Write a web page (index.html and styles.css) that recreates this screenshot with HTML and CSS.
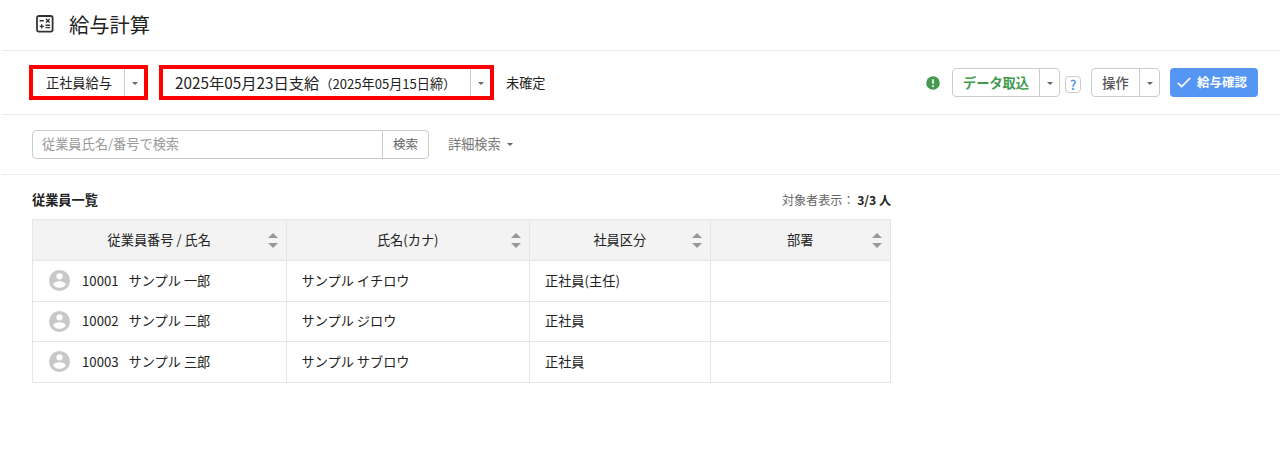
FILE: index.html
```html
<!DOCTYPE html>
<html lang="ja">
<head>
    <meta charset="UTF-8">
    <meta name="viewport" content="width=device-width, initial-scale=1.0">
    <title>給与計算</title>
    <link rel="stylesheet" href="styles.css">
</head>
<body>
    <header class="page-header">
        <svg class="calc-icon" width="18" height="18" viewBox="0 0 18 18" fill="none" stroke="#333">
            <rect x="1" y="1" width="15.6" height="15.6" rx="1.8" stroke-width="1.8"/>
            <path d="M3.6 5.800h4.200M3.600 11.400h4.200M5.700 9.300v4.200M9.600 10.300h4.400M9.600 12.600h4.400M10 4l3.600 3.600M13.600 4l-3.600 3.600" stroke-width="1.4"/>
        </svg>
        <h1>給与計算</h1>
    </header>

    <section class="toolbar">
        <div class="select select-type">
            <span class="select-label">正社員給与</span>
            <span class="select-toggle"><i class="caret"></i></span>
        </div>
        <div class="select select-date">
            <span class="select-label">2025年05月23日支給<small>（2025年05月15日締）</small></span>
            <span class="select-toggle"><i class="caret"></i></span>
        </div>
        <span class="status">未確定</span>

        <div class="actions">
            <svg class="alert-icon" width="14" height="14" viewBox="0 0 14 14">
                <circle cx="7" cy="7" r="6.8" fill="#439a50"/>
                <path d="M7 3.2v4.6M7 9.2v1.7" stroke="#fff" stroke-width="1.6"/>
            </svg>
            <div class="split-button import">
                <button class="main">データ取込</button>
                <button class="toggle"><i class="caret"></i></button>
            </div>
            <a class="help" href="#">?</a>
            <div class="split-button operate">
                <button class="main">操作</button>
                <button class="toggle"><i class="caret"></i></button>
            </div>
            <button class="confirm">
                <svg width="14" height="11" viewBox="0 0 14 11" fill="none" stroke="#fff" stroke-width="1.7">
                    <path d="M.8 5.8l3.8 3.8L13.2 1"/>
                </svg>
                給与確認
            </button>
        </div>
    </section>

    <section class="search">
        <div class="search-box">
            <input type="text" placeholder="従業員氏名/番号で検索">
            <button>検索</button>
        </div>
        <a class="search-detail" href="#">詳細検索<i class="caret"></i></a>
    </section>

    <main class="employees">
        <div class="list-head">
            <h2>従業員一覧</h2>
            <p>対象者表示： <b>3/3 人</b></p>
        </div>
        <table>
            <colgroup>
                <col class="col-number">
                <col class="col-kana">
                <col class="col-type">
                <col class="col-dept">
            </colgroup>
            <thead>
                <tr>
                    <th><div class="th-inner">従業員番号 / 氏名<span class="sort"></span></div></th>
                    <th><div class="th-inner">氏名(カナ)<span class="sort"></span></div></th>
                    <th><div class="th-inner">社員区分<span class="sort"></span></div></th>
                    <th><div class="th-inner">部署<span class="sort"></span></div></th>
                </tr>
            </thead>
            <tbody>
                <tr>
                    <td>
                        <div class="person">
                            <svg class="avatar" viewBox="0 0 20 20"><circle cx="10" cy="10" r="10" fill="#c8c8c8"/><circle cx="10" cy="6" r="3" fill="#fff"/><path d="M4 13.8c.1-2 4-3.1 6-3.1s5.900 1.100 6 3.100c-1.300 2-3.500 3.200-6 3.200s-4.700-1.200-6-3.200z" fill="#fff"/></svg>
                            <span class="number">10001</span>サンプル 一郎
                        </div>
                    </td>
                    <td>サンプル イチロウ</td>
                    <td>正社員(主任)</td>
                    <td></td>
                </tr>
                <tr>
                    <td>
                        <div class="person">
                            <svg class="avatar" viewBox="0 0 20 20"><circle cx="10" cy="10" r="10" fill="#c8c8c8"/><circle cx="10" cy="6" r="3" fill="#fff"/><path d="M4 13.8c.1-2 4-3.1 6-3.1s5.900 1.100 6 3.100c-1.300 2-3.500 3.200-6 3.200s-4.700-1.200-6-3.200z" fill="#fff"/></svg>
                            <span class="number">10002</span>サンプル 二郎
                        </div>
                    </td>
                    <td>サンプル ジロウ</td>
                    <td>正社員</td>
                    <td></td>
                </tr>
                <tr>
                    <td>
                        <div class="person">
                            <svg class="avatar" viewBox="0 0 20 20"><circle cx="10" cy="10" r="10" fill="#c8c8c8"/><circle cx="10" cy="6" r="3" fill="#fff"/><path d="M4 13.8c.1-2 4-3.1 6-3.1s5.900 1.100 6 3.100c-1.300 2-3.500 3.200-6 3.200s-4.700-1.200-6-3.200z" fill="#fff"/></svg>
                            <span class="number">10003</span>サンプル 三郎
                        </div>
                    </td>
                    <td>サンプル サブロウ</td>
                    <td>正社員</td>
                    <td></td>
                </tr>
            </tbody>
        </table>
    </main>
</body>
</html>
```
FILE: styles.css
```css
* {
    margin: 0;
    padding: 0;
    box-sizing: border-box;
}

body {
    font-family: "Noto Sans CJK JP", sans-serif;
    font-size: 13.2px;
    line-height: 20px;
    color: #222;
    background-color: #fff;
    padding-left: 2px;
}

button,
input {
    font-family: inherit;
    font-size: inherit;
    line-height: 20px;
    background: none;
    border: none;
}

a {
    text-decoration: none;
}

/* Header */
.page-header {
    display: flex;
    align-items: center;
    height: 51px;
    padding: 0 0 3px 34px;
    border-bottom: 1px solid #ebebeb;
}

.page-header h1 {
    margin-left: 15px;
    font-size: 20.3px;
    font-weight: 400;
    line-height: 30px;
}

/* Toolbar */
.toolbar {
    display: flex;
    align-items: center;
    height: 64px;
    padding: 0 22px 0 27px;
    border-bottom: 1px solid #ebebeb;
}

.select {
    display: flex;
    height: 35px;
    border: 4px solid #f00;
}

.select-label {
    flex: 1;
    padding-left: 12px;
    line-height: 27px;
    white-space: nowrap;
}

.select-toggle {
    display: flex;
    align-items: center;
    justify-content: center;
    border-left: 1px solid #ccc;
}

.select-type {
    width: 119px;
}

.select-type .select-label {
    padding-left: 13px;
}

.select-type .select-toggle {
    width: 20px;
}

.select-date {
    width: 335px;
    margin-left: 11px;
}

.select-date .select-label {
    font-size: 15.3px;
}

.select-date small {
    font-size: 13.1px;
}

.select-date .select-toggle {
    width: 20px;
}

.caret {
    display: inline-block;
    margin-top: 1px;
    border: 3px solid transparent;
    border-top-color: #666;
    border-bottom: none;
}

.status {
    margin-left: 12px;
}

.actions {
    display: flex;
    align-items: center;
    margin-left: auto;
}

.split-button {
    display: flex;
    height: 29px;
    border: 1px solid #ccc;
    border-radius: 4px;
}

.split-button .main {
    flex: 1;
    color: #555;
    font-weight: 500;
}

.split-button .toggle {
    display: flex;
    align-items: center;
    justify-content: center;
    width: 20px;
    border-left: 1px solid #ccc;
}

.import {
    width: 108px;
    margin-left: 12px;
}

.import .main {
    color: #439a50;
    font-weight: 700;
}

.help {
    width: 16px;
    height: 17px;
    margin: 4px 10px 0 5px;
    border: 1px solid #ccc;
    border-radius: 4px;
    color: #4c93f0;
    font-size: 13.5px;
    font-weight: 500;
    line-height: 15px;
    text-align: center;
}

.operate {
    width: 69px;
}

.confirm {
    display: flex;
    align-items: center;
    gap: 6px;
    width: 88px;
    height: 29px;
    margin-left: 10px;
    padding: 0 0 1px 7px;
    border-radius: 4px;
    background-color: #5596f2;
    color: #fff;
    font-size: 12.5px;
    font-weight: 700;
    white-space: nowrap;
}

/* Search */
.search {
    display: flex;
    align-items: center;
    height: 60px;
    padding: 0 0 1px 30px;
    border-bottom: 1px solid #ebebeb;
}

.search-box {
    display: flex;
    width: 397px;
    height: 29px;
    border: 1px solid #ccc;
    border-radius: 4px;
}

.search-box input {
    flex: 1;
    padding: 0 9px;
}

.search-box input::placeholder {
    color: #999;
}

.search-box button {
    width: 46px;
    border-left: 1px solid #ccc;
    color: #666;
    font-size: 12.5px;
}

.search-detail {
    display: flex;
    align-items: center;
    gap: 6px;
    margin-left: 19px;
    color: #777;
}

/* Employee list */
.employees {
    width: 889px;
    padding: 15px 0 0 30px;
}

.list-head {
    display: flex;
    justify-content: space-between;
    height: 29px;
}

.list-head h2 {
    font-size: 13.2px;
    font-weight: 700;
}

.list-head p {
    color: #666;
    font-size: 12.1px;
}

.list-head b {
    color: #222;
    font-weight: 700;
}

table {
    width: 859px;
    table-layout: fixed;
    border-collapse: collapse;
}

.col-number {
    width: 253.5px;
}

.col-kana {
    width: 243.5px;
}

.col-type {
    width: 180.5px;
}

th,
td {
    border: 1px solid #e5e5e5;
}

th {
    height: 41px;
    background-color: #f3f3f3;
    font-weight: 400;
}

td {
    height: 40.5px;
    padding: 0 15px;
}

.th-inner {
    display: flex;
    align-items: center;
    justify-content: center;
    position: relative;
}

.sort {
    position: absolute;
    right: 8px;
    display: flex;
    flex-direction: column;
    gap: 5px;
}

.sort::before,
.sort::after {
    content: "";
    border: 5px solid transparent;
}

.sort::before {
    border-top: none;
    border-bottom-color: #999;
}

.sort::after {
    border-bottom: none;
    border-top-color: #999;
}

.person {
    display: flex;
    align-items: center;
    padding-left: 1px;
}

.avatar {
    width: 21px;
    height: 21px;
    margin-right: 12px;
}

.number {
    margin-right: 10px;
}
```
